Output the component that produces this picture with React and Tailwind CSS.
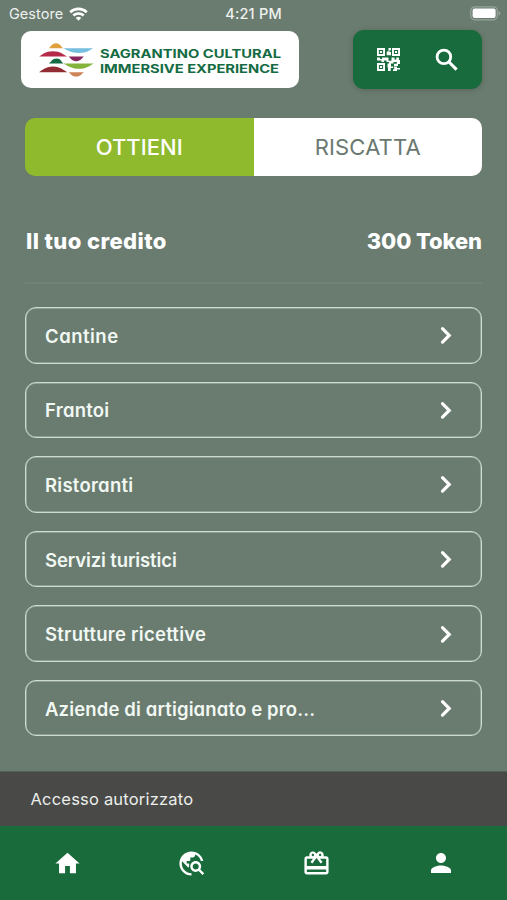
import React from "react";
import {
  MdHome,
  MdOutlineTravelExplore,
  MdOutlineRedeem,
  MdPerson,
} from "react-icons/md";

const rows = [
  { label: "Cantine", cls: "tracking-[0.5px]" },
  { label: "Frantoi", cls: "tracking-[0.25px]" },
  { label: "Ristoranti", cls: "tracking-[0.25px]" },
  { label: "Servizi turistici", cls: "tracking-[-0.12px]" },
  { label: "Strutture ricettive", cls: "tracking-[0.25px]" },
  { label: "Aziende di artigianato e pro...", cls: "tracking-[0.14px]" },
];

function StatusBar() {
  return (
    <div className="flex h-[27px] items-center px-[9px] pt-[2px] text-[14.5px] leading-none text-[#eef1ee]">
      <div className="flex flex-1 items-center gap-[6px]">
        <span className="tracking-[0.05px]">Gestore</span>
        <svg width="19" height="14" viewBox="0 0 19 14" fill="none" stroke="#fff" strokeWidth="2.6" className="mt-[-2px]">
          <path d="M1.2 5.2a12 12 0 0 1 16.6 0" />
          <path d="M4.3 8.5a7.6 7.6 0 0 1 10.4 0" />
          <path d="M9.5 13.8 6.8 10.9a4 4 0 0 1 5.4 0Z" fill="#fff" stroke="none" />
        </svg>
      </div>
      <span className="font-medium tracking-[0.2px]">4:21 PM</span>
      <div className="flex flex-1 justify-end">
        <svg width="31" height="15" viewBox="0 0 31 15" className="mr-[-3px] mt-[-2px]">
          <rect x="0.8" y="0.8" width="26.5" height="13" rx="4" fill="none" stroke="#98a59b" strokeWidth="1.2" />
          <rect x="2.6" y="2.5" width="23" height="9.6" rx="2" fill="#fff" />
          <path d="M28.6 5v4.6c1-.4 1.7-1.3 1.7-2.3S29.6 5.4 28.6 5Z" fill="#98a59b" />
        </svg>
      </div>
    </div>
  );
}

function Logo() {
  return (
    <div className="ml-[0.5px] flex h-[57px] w-[278.5px] items-center rounded-[10px] bg-white pl-[18px]">
      <svg width="56" height="36" viewBox="0 0 56 36" className="shrink-0">
        <path d="M9.500 6.300C11.500 5.500 12.500 1.200 17 1.200S22.500 5.500 24.500 6.300Z" fill="#dfa13c" />
        <path d="M24.500 6.300H54C51 8 48 11 40 11S28 8 24.500 6.300Z" fill="#74bfe0" />
        <path d="M0 14.500C3 13 6 9.200 14 9.200S24.500 13 28.500 14.500Z" fill="#b62a49" />
        <path d="M29.500 14.500H45C43 15.500 42 19.200 37.200 19.200S31.500 15.500 29.500 14.500Z" fill="#87255d" />
        <path d="M10 21.400C12 20.500 13 16.600 17.500 16.600S22.500 20.500 24.500 21.400Z" fill="#126a43" />
        <path d="M24.500 21.400H54.500C51.500 23 48 26.700 40 26.700S28 23 24.500 21.400Z" fill="#83b33a" />
        <path d="M0 30.200C3 28.700 6 24.600 14 24.600S24.500 28.700 28.500 30.200Z" fill="#902c32" />
        <path d="M29.500 30.200H45C43 31.200 42 34.600 37.200 34.600S31.500 31.200 29.500 30.200Z" fill="#cf8558" />
      </svg>
      <div className="ml-[5px] mt-[5px] flex w-[180px] flex-col whitespace-nowrap text-[11.3px] font-bold leading-[15.5px] text-[#146b43]">
        <span className="w-max origin-left scale-x-[1.3] tracking-[0.02px]">SAGRANTINO CULTURAL</span>
        <span className="w-max origin-left scale-x-[1.3]">IMMERSIVE EXPERIENCE</span>
      </div>
    </div>
  );
}

function QrIcon() {
  return (
    <svg width="23" height="23" viewBox="0 0 23 23" fill="#fff">
      <path
        fillRule="evenodd"
        d="M0 0h8v8H0ZM1.900 1.900v4.200h4.200v-4.200ZM15 0h8v8h-8ZM16.900 1.900v4.200h4.200v-4.200ZM0 15h8v8H0ZM1.900 16.900v4.200h4.200v-4.200Z"
      />
      <path d="M2.900 2.900h2.200v2.200H2.900ZM17.900 2.900h2.200v2.200h-2.200ZM2.900 17.900h2.200v2.200H2.900Z" />
      <path d="M11.500 0H14v2.200h-1.500V4H14v3.200h-4.300V3.500h1.800ZM0 9.500h3V11h2V9.500h6.500v3.200h3V9.500h3v2h1.800v-2H22V12h1v4h-2v2h-4v-2.300h2.800V14h-3.300v1.500H12V14H9.500v-1.500H7V14H4.500v-1.500H0ZM10.500 15.500H14v3h2V20h-2.300v3H11v-3.500h-.5ZM16.500 18.500H20V20h3v1.500h-3V23h-4v-1.800h1.500Z" />
    </svg>
  );
}

function SearchIcon() {
  return (
    <svg width="30" height="30" viewBox="0 0 30 30" fill="none" stroke="#fff" strokeWidth="2.8" className="ml-[32px]">
      <circle cx="11.900" cy="11.900" r="6.800" />
      <path d="m17 17 7.600 7.600" strokeWidth="3.100" />
    </svg>
  );
}

export default function App() {
  return (
    <div className="flex h-[900px] w-[507px] flex-col overflow-hidden bg-[#6a7b6f] font-['Inter','Liberation_Sans',sans-serif] text-white">
      <StatusBar />
      <header className="mt-[3px] flex h-[59px] shrink-0 items-center justify-between pl-5 pr-[25px]">
        <Logo />
        <div className="flex h-[59px] w-[129px] items-center rounded-[11px] bg-[#186b3c] pl-6 shadow-[0_1px_5px_rgba(50,65,50,0.35)]">
          <QrIcon />
          <SearchIcon />
        </div>
      </header>

      <div className="mx-[25px] mt-[29px] flex h-[58px] shrink-0 overflow-hidden rounded-[10px] text-[22px]">
        <div className="flex flex-1 items-center justify-center bg-[#90ba2d] font-[450] tracking-[0.05px]">OTTIENI</div>
        <div className="flex flex-1 items-center justify-center bg-white tracking-[0.15px] text-[#6a7870]">RISCATTA</div>
      </div>

      <div className="mx-[25px] flex h-[108px] shrink-0 items-center justify-between border-b-2 border-[#728277] pt-[24px] text-[22px] font-extrabold [font-feature-settings:'cv11']">
        <span className="ml-px tracking-[0.4px]">Il tuo credito</span>
        <span className="tracking-[-0.1px]">300 Token</span>
      </div>

      <div className="mx-[25px] mt-[23px] flex shrink-0 flex-col gap-[18.1px]">
        {rows.map((r) => (
          <div
            key={r.label}
            className="flex h-[56.5px] items-center justify-between rounded-[11px] border border-[#cddbd0] pl-[19px] pr-[20px] text-[18.5px] font-[570] text-[#f1f8f3] shadow-[inset_0_0_0_0.5px_#b4c4b8] [font-feature-settings:'cv11']"
          >
            <span className={`mt-[3px] ${r.cls}`}>{r.label}</span>
            <svg width="32" height="32" viewBox="0 0 32 32" fill="none" stroke="#fff" strokeWidth="3.2" strokeLinecap="round">
              <path d="m13.500 9.700 6.700 6.700-6.700 6.700" />
            </svg>
          </div>
        ))}
      </div>

      <div className="mt-auto flex h-[55px] shrink-0 items-center border-t border-[#526056] bg-[#494a47] pl-[30.5px] text-[16.5px] tracking-[0.2px] text-[#eceeec]">
        Accesso autorizzato
      </div>
      <nav className="flex h-[74px] shrink-0 items-center justify-between bg-[#196b3c] pl-[52.5px] pr-[51px]">
        <MdHome size={29} />
        <MdOutlineTravelExplore size={29} />
        <MdOutlineRedeem size={29} />
        <MdPerson size={30} />
      </nav>
    </div>
  );
}
